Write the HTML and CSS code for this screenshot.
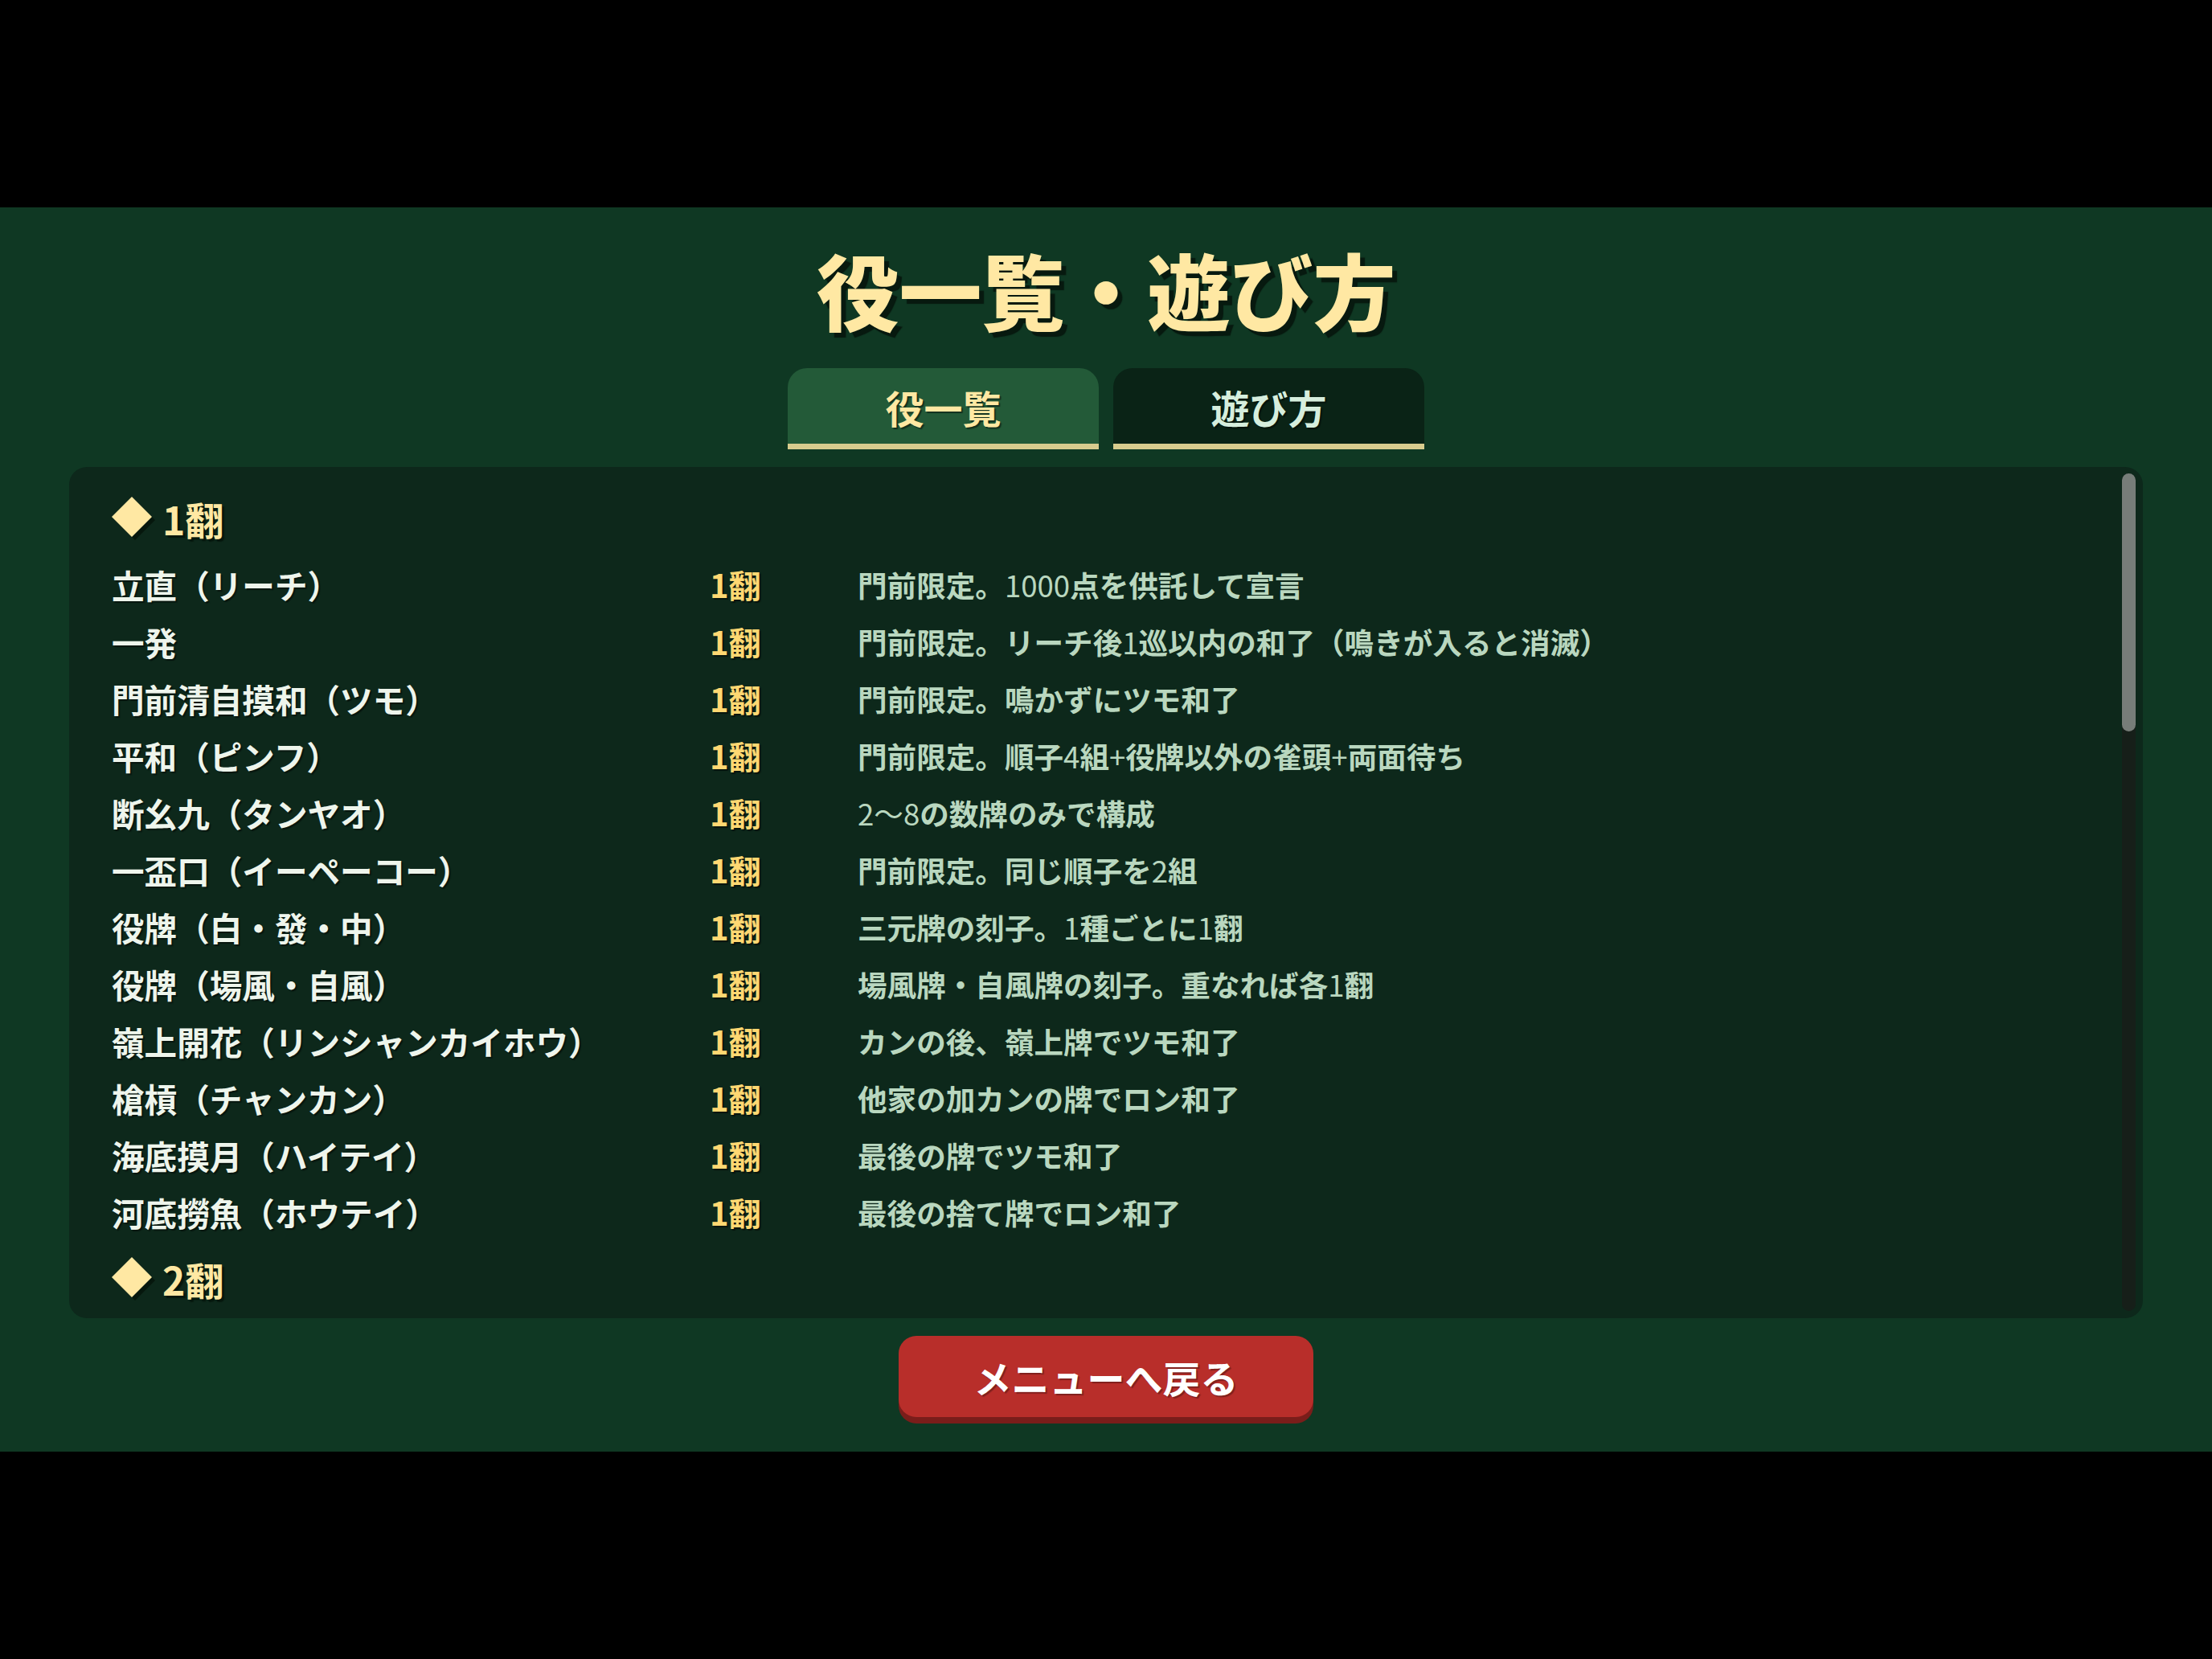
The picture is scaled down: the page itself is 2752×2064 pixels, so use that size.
FILE: index.html
```html
<!DOCTYPE html>
<html lang="ja">
<head>
<meta charset="utf-8">
<title>役一覧・遊び方</title>
<link rel="stylesheet" href="styles.css">
</head>
<body>
<div class="stage">
  <div class="screen">
    <h1 class="title">役一覧・遊び方</h1>
    <div class="tabs">
      <div class="tab active">役一覧</div>
      <div class="tab">遊び方</div>
    </div>
    <div class="panel">
      <div class="list">
        <section class="group">
          <div class="group-head"><svg class="dia" viewBox="0 0 56 56" width="56" height="56"><polygon points="29,4 54,29 29,54 4,29" fill="#06170d"/><polygon points="25,0 50,25 25,50 0,25" fill="#ffe8a3"/></svg><span class="head-text">1翻</span></div>
          <div class="row"><span class="name">立直（リーチ）</span><span class="han">1翻</span><span class="desc">門前限定。<span class="num">1000</span>点を供託して宣言</span></div>
          <div class="row"><span class="name">一発</span><span class="han">1翻</span><span class="desc">門前限定。リーチ後<span class="num">1</span>巡以内の和了（鳴きが入ると消滅）</span></div>
          <div class="row"><span class="name">門前清自摸和（ツモ）</span><span class="han">1翻</span><span class="desc">門前限定。鳴かずにツモ和了</span></div>
          <div class="row"><span class="name">平和（ピンフ）</span><span class="han">1翻</span><span class="desc">門前限定。順子<span class="num">4</span>組<span class="num">+</span>役牌以外の雀頭<span class="num">+</span>両面待ち</span></div>
          <div class="row"><span class="name">断幺九（タンヤオ）</span><span class="han">1翻</span><span class="desc"><span class="num">2〜8</span>の数牌のみで構成</span></div>
          <div class="row"><span class="name">一盃口（イーペーコー）</span><span class="han">1翻</span><span class="desc">門前限定。同じ順子を<span class="num">2</span>組</span></div>
          <div class="row"><span class="name">役牌（白・發・中）</span><span class="han">1翻</span><span class="desc">三元牌の刻子。<span class="num">1</span>種ごとに<span class="num">1</span>翻</span></div>
          <div class="row"><span class="name">役牌（場風・自風）</span><span class="han">1翻</span><span class="desc">場風牌・自風牌の刻子。重なれば各<span class="num">1</span>翻</span></div>
          <div class="row"><span class="name">嶺上開花（リンシャンカイホウ）</span><span class="han">1翻</span><span class="desc">カンの後、嶺上牌でツモ和了</span></div>
          <div class="row"><span class="name">槍槓（チャンカン）</span><span class="han">1翻</span><span class="desc">他家の加カンの牌でロン和了</span></div>
          <div class="row"><span class="name">海底摸月（ハイテイ）</span><span class="han">1翻</span><span class="desc">最後の牌でツモ和了</span></div>
          <div class="row"><span class="name">河底撈魚（ホウテイ）</span><span class="han">1翻</span><span class="desc">最後の捨て牌でロン和了</span></div>
        </section>
        <section class="group">
          <div class="group-head"><svg class="dia" viewBox="0 0 56 56" width="56" height="56"><polygon points="29,4 54,29 29,54 4,29" fill="#06170d"/><polygon points="25,0 50,25 25,50 0,25" fill="#ffe8a3"/></svg><span class="head-text">2翻</span></div>
          <div class="row"><span class="name">ダブル立直（ダブルリーチ）</span><span class="han">2翻</span><span class="desc">門前限定。第<span class="num">1</span>打牌でリーチ</span></div>
          <div class="row"><span class="name">七対子（チートイツ）</span><span class="han">2翻</span><span class="desc">門前限定。異なる対子<span class="num">7</span>組</span></div>
          <div class="row"><span class="name">対々和（トイトイ）</span><span class="han">2翻</span><span class="desc">刻子<span class="num">4</span>組<span class="num">+</span>雀頭</span></div>
          <div class="row"><span class="name">三暗刻（サンアンコー）</span><span class="han">2翻</span><span class="desc">暗刻を<span class="num">3</span>組</span></div>
          <div class="row"><span class="name">三色同刻（サンショクドーコー）</span><span class="han">2翻</span><span class="desc"><span class="num">3</span>色で同じ数字の刻子</span></div>
          <div class="row"><span class="name">三色同順（サンショク）</span><span class="han">2翻</span><span class="desc"><span class="num">3</span>色で同じ数字の順子（鳴くと<span class="num">1</span>翻）</span></div>
          <div class="row"><span class="name">混全帯幺九（チャンタ）</span><span class="han">2翻</span><span class="desc">全ての面子と雀頭に幺九牌を含む（鳴くと<span class="num">1</span>翻）</span></div>
          <div class="row"><span class="name">一気通貫（イッツー）</span><span class="han">2翻</span><span class="desc">同色で<span class="num">123・456・789</span>（鳴くと<span class="num">1</span>翻）</span></div>
          <div class="row"><span class="name">小三元（ショウサンゲン）</span><span class="han">2翻</span><span class="desc">三元牌の<span class="num">2</span>つを刻子、<span class="num">1</span>つを雀頭</span></div>
          <div class="row"><span class="name">混老頭（ホンロートー）</span><span class="han">2翻</span><span class="desc">幺九牌のみで構成</span></div>
          <div class="row"><span class="name">三槓子（サンカンツ）</span><span class="han">2翻</span><span class="desc">槓子を<span class="num">3</span>組</span></div>
        </section>
        <section class="group">
          <div class="group-head"><svg class="dia" viewBox="0 0 56 56" width="56" height="56"><polygon points="29,4 54,29 29,54 4,29" fill="#06170d"/><polygon points="25,0 50,25 25,50 0,25" fill="#ffe8a3"/></svg><span class="head-text">3翻</span></div>
          <div class="row"><span class="name">二盃口（リャンペーコー）</span><span class="han">3翻</span><span class="desc">門前限定。一盃口を<span class="num">2</span>組</span></div>
          <div class="row"><span class="name">混一色（ホンイツ）</span><span class="han">3翻</span><span class="desc"><span class="num">1</span>種類の数牌<span class="num">+</span>字牌のみ（鳴くと<span class="num">2</span>翻）</span></div>
          <div class="row"><span class="name">純全帯幺九（ジュンチャン）</span><span class="han">3翻</span><span class="desc">全ての面子と雀頭に老頭牌を含む（鳴くと<span class="num">2</span>翻）</span></div>
        </section>
        <section class="group">
          <div class="group-head"><svg class="dia" viewBox="0 0 56 56" width="56" height="56"><polygon points="29,4 54,29 29,54 4,29" fill="#06170d"/><polygon points="25,0 50,25 25,50 0,25" fill="#ffe8a3"/></svg><span class="head-text">6翻</span></div>
          <div class="row"><span class="name">清一色（チンイツ）</span><span class="han">6翻</span><span class="desc"><span class="num">1</span>種類の数牌のみ（鳴くと<span class="num">5</span>翻）</span></div>
        </section>
        <section class="group">
          <div class="group-head"><svg class="dia" viewBox="0 0 56 56" width="56" height="56"><polygon points="29,4 54,29 29,54 4,29" fill="#06170d"/><polygon points="25,0 50,25 25,50 0,25" fill="#ffe8a3"/></svg><span class="head-text">役満</span></div>
          <div class="row"><span class="name">国士無双（コクシムソウ）</span><span class="han">役満</span><span class="desc"><span class="num">13</span>種の幺九牌を<span class="num">1</span>枚ずつ<span class="num">+1</span>枚</span></div>
          <div class="row"><span class="name">四暗刻（スーアンコー）</span><span class="han">役満</span><span class="desc">門前限定。暗刻を<span class="num">4</span>組</span></div>
          <div class="row"><span class="name">大三元（ダイサンゲン）</span><span class="han">役満</span><span class="desc">三元牌を全て刻子</span></div>
          <div class="row"><span class="name">字一色（ツーイーソー）</span><span class="han">役満</span><span class="desc">字牌のみで構成</span></div>
          <div class="row"><span class="name">小四喜（ショウスーシー）</span><span class="han">役満</span><span class="desc">風牌の<span class="num">3</span>つを刻子、<span class="num">1</span>つを雀頭</span></div>
          <div class="row"><span class="name">大四喜（ダイスーシー）</span><span class="han">役満</span><span class="desc">風牌を全て刻子</span></div>
          <div class="row"><span class="name">緑一色（リューイーソー）</span><span class="han">役満</span><span class="desc">緑色の牌のみで構成</span></div>
          <div class="row"><span class="name">清老頭（チンロートー）</span><span class="han">役満</span><span class="desc">老頭牌のみで構成</span></div>
          <div class="row"><span class="name">四槓子（スーカンツ）</span><span class="han">役満</span><span class="desc">槓子を<span class="num">4</span>組</span></div>
          <div class="row"><span class="name">九蓮宝燈（チューレンポートー）</span><span class="han">役満</span><span class="desc">門前限定。<span class="num">1112345678999+</span>同色<span class="num">1</span>枚</span></div>
          <div class="row"><span class="name">天和（テンホー）</span><span class="han">役満</span><span class="desc">親の配牌で和了</span></div>
          <div class="row"><span class="name">地和（チーホー）</span><span class="han">役満</span><span class="desc">子の第<span class="num">1</span>ツモで和了</span></div>
        </section>
      </div>
      <div class="scrollbar"><div class="thumb"></div></div>
    </div>
    <button class="back">メニューへ戻る</button>
  </div>
</div>
</body>
</html>
```
FILE: styles.css
```css
* { box-sizing: border-box; }
html, body {
  margin: 0;
  padding: 0;
  background: #000;
}
body {
  font-family: "Noto Sans CJK JP", "Noto Sans", sans-serif;
}
.stage {
  width: 100vw;
  height: 100vh;
  display: flex;
  align-items: center;
  justify-content: center;
}
.screen {
  width: 2752px;
  height: 1548px;
  background: #0f3823;
  display: flex;
  flex-direction: column;
  align-items: center;
  padding-top: 41px;
}
.title {
  margin: 0;
  font-size: 103px;
  line-height: 122px;
  height: 122px;
  font-weight: 900;
  color: #ffe8a3;
  text-shadow: 6px 6px 1px #07190f;
  letter-spacing: 0;
}
.tabs {
  margin-top: 37px;
  display: flex;
  gap: 18px;
}
.tab {
  width: 387px;
  height: 101px;
  border-radius: 24px 24px 0 0;
  border-bottom: 7px solid #d8cc8e;
  background: #0a2316;
  color: #d6eedd;
  font-size: 48px;
  font-weight: 700;
  display: flex;
  align-items: center;
  justify-content: center;
  padding-top: 2px;
  text-shadow: 2px 2px 1px rgba(0, 0, 0, 0.45);
}
.tab.active {
  background: #235a38;
  color: #ffe8a3;
}
.panel {
  position: relative;
  margin-top: 22px;
  width: 2580px;
  height: 1059px;
  background: #0d281b;
  border-radius: 22px;
  padding: 8px 0 9px 0;
}
.list {
  height: 100%;
  overflow: hidden;
  padding: 9px 60px 0 53px;
}
.group-head {
  height: 94px;
  display: flex;
  align-items: center;
  gap: 7px;
}
.dia {
  display: block;
  margin-top: 2px;
}
.head-text {
  font-size: 48px;
  font-weight: 700;
  color: #ffe8a3;
  text-shadow: 3px 3px 1px #06170d;
  line-height: 1;
}
.row {
  height: 71px;
  display: grid;
  grid-template-columns: 744px 184px 1fr;
  align-items: center;
  line-height: 71px;
  white-space: nowrap;
}
.name {
  font-size: 40.6px;
  font-weight: 700;
  color: #eef5ec;
  text-shadow: 2px 2px 1px rgba(0, 0, 0, 0.45);
}
.han {
  font-size: 40px;
  font-weight: 700;
  color: #ffd872;
  text-shadow: 2px 2px 1px rgba(0, 0, 0, 0.5);
}
.desc {
  font-size: 36.6px;
  font-weight: 700;
  color: #b9d7bf;
}
.desc .num {
  font-weight: 400;
}
.scrollbar {
  position: absolute;
  top: 8px;
  right: 9px;
  width: 17px;
  height: 1042px;
  border-radius: 9px;
  background: #161f19;
}
.thumb {
  width: 17px;
  height: 321px;
  border-radius: 9px;
  background: #777d79;
}
.back {
  margin-top: 22px;
  width: 516px;
  height: 101px;
  border: none;
  border-radius: 22px;
  background: #b82e2a;
  box-shadow: 0 8px 0 #7a1d1a;
  color: #ffffff;
  font-family: "Noto Sans CJK JP", "Noto Sans", sans-serif;
  font-size: 47px;
  font-weight: 700;
  padding: 0;
  text-shadow: 2px 2px 1px rgba(0, 0, 0, 0.3);
}
```
